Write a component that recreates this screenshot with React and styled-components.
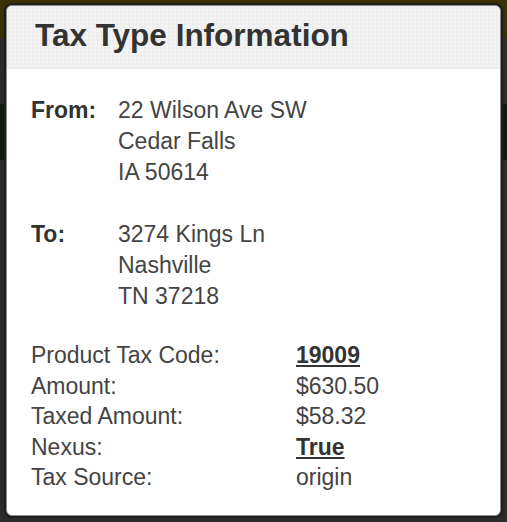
import React from 'react';
import styled, { createGlobalStyle } from 'styled-components';

// --- Global ---
const GlobalStyle = createGlobalStyle`
  html, body {
    margin: 0;
    padding: 0;
  }
  body {
    width: 507px;
    height: 522px;
    overflow: hidden;
    font-family: "Liberation Sans", Arial, sans-serif;
    background:
      linear-gradient(to bottom,
        #3a3100 0px, #3a3100 38px,
        #2b2b2b 38px, #2b2b2b 104px,
        #111c0f 104px, #111c0f 160px,
        #2b2b2b 160px, #2b2b2b 100%);
  }
`;

// --- Layout ---
const Backdrop = styled.div`
  box-sizing: border-box;
  width: 507px;
  height: 522px;
  padding: 5px 6px 6px 6px;
  display: flex;
`;

const Modal = styled.div`
  flex: 1;
  display: flex;
  flex-direction: column;
  background: #fff;
  border: 1px solid #8a8a8a;
  border-radius: 6px;
  overflow: hidden;
  box-shadow: 0 0 0 2px #1e1e1e;
`;

const ModalHeader = styled.div`
  height: 63px;
  box-sizing: border-box;
  padding: 0 0 0 28px;
  display: flex;
  align-items: center;
  background-color: #f2f2f2;
  background-image: radial-gradient(rgba(0, 0, 0, 0.025) 1px, transparent 1px);
  background-size: 4px 4px;
  border-bottom: 1px solid #ececec;
`;

const Title = styled.h2`
  margin: 0;
  margin-top: -3px;
  font-size: 31.5px;
  font-weight: 700;
  color: #333;
`;

const ModalBody = styled.div`
  padding: 25px 24px 0 24px;
  display: flex;
  flex-direction: column;
  gap: 30px;
  color: #444;
  font-size: 23px;
`;

const AddressBlock = styled.div`
  display: grid;
  grid-template-columns: 87px 1fr;
  line-height: 31px;
  margin-top: 1px;
`;

const AddressLabel = styled.div`
  font-weight: 700;
  color: #333;
`;

const DetailGrid = styled.div`
  display: grid;
  grid-template-columns: 265px 1fr;
  line-height: 30.5px;
  margin-top: -2px;
`;

const Value = styled.div`
  font-weight: ${p => (p.$strong ? 700 : 400)};
  text-decoration: ${p => (p.$strong ? 'underline' : 'none')};
  color: ${p => (p.$strong ? '#333' : '#444')};
`;

const from = ['22 Wilson Ave SW', 'Cedar Falls', 'IA 50614'];
const to = ['3274 Kings Ln', 'Nashville', 'TN 37218'];

const details = [
  { label: 'Product Tax Code:', value: '19009', strong: true },
  { label: 'Amount:', value: '$630.50' },
  { label: 'Taxed Amount:', value: '$58.32' },
  { label: 'Nexus:', value: 'True', strong: true },
  { label: 'Tax Source:', value: 'origin' },
];

const Address = ({ label, lines }) => (
  <AddressBlock>
    <AddressLabel>{label}</AddressLabel>
    <div>
      {lines.map(l => (
        <div key={l}>{l}</div>
      ))}
    </div>
  </AddressBlock>
);

const App = () => {
  return (
    <>
      <GlobalStyle />
      <Backdrop>
        <Modal>
          <ModalHeader>
            <Title>Tax Type Information</Title>
          </ModalHeader>
          <ModalBody>
            <Address label="From:" lines={from} />
            <Address label="To:" lines={to} />
            <DetailGrid>
              {details.map(d => (
                <React.Fragment key={d.label}>
                  <div>{d.label}</div>
                  <Value $strong={d.strong}>{d.value}</Value>
                </React.Fragment>
              ))}
            </DetailGrid>
          </ModalBody>
        </Modal>
      </Backdrop>
    </>
  );
};

export default App;
